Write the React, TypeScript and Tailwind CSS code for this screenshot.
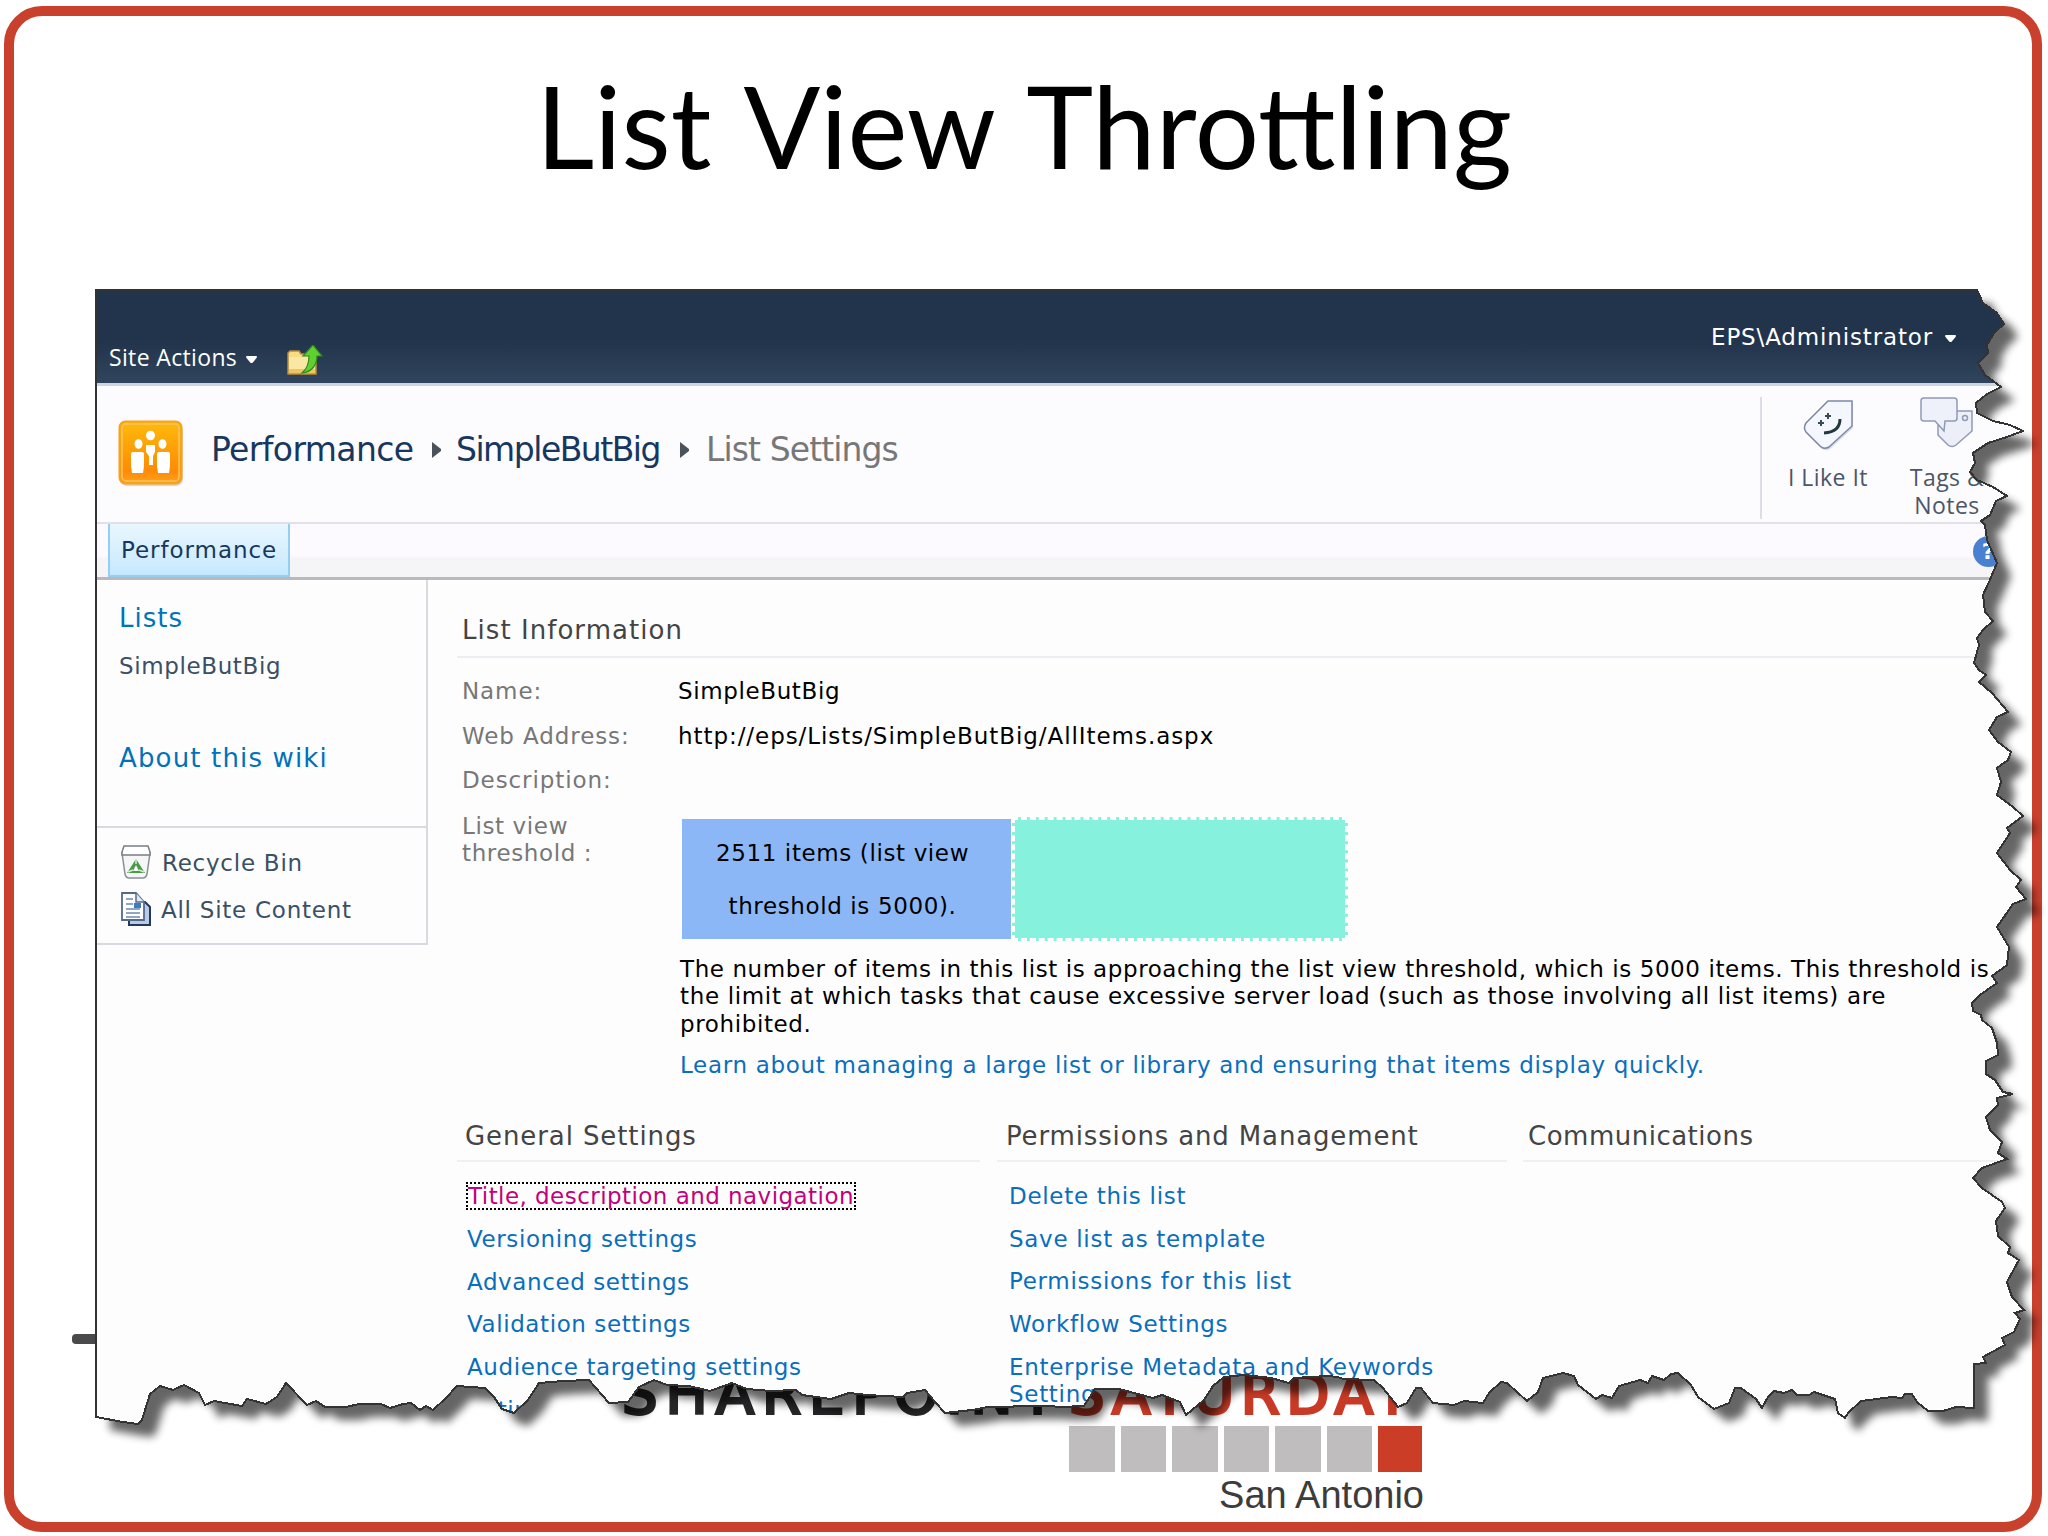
import type { ReactNode } from "react";

type Point = [number, number];

// Outline of the torn page in slide coordinates, clockwise from the top left.
const tornEdge: Point[] = [
  [96, 290], [1977, 290], [1983, 303], [1997, 313], [2004, 324], [1994, 333], [1987, 345], [1988, 353],
  [1978, 363], [1985, 375], [2001, 387], [1987, 394], [1976, 403], [1977, 413], [1993, 421], [2010, 425],
  [2023, 431], [2007, 437], [1988, 443], [1973, 453], [1975, 463], [1970, 472], [1977, 480], [1993, 487],
  [2007, 496], [1996, 501], [1990, 515], [1981, 521], [1985, 525], [1987, 540], [1997, 563], [1989, 582],
  [1983, 595], [1985, 612], [1993, 621], [1983, 630], [1977, 638], [1979, 645], [1974, 663], [1979, 670],
  [1986, 675], [1979, 682], [1992, 693], [2008, 712], [1997, 717], [1989, 730], [1998, 742], [2011, 752],
  [2008, 760], [1997, 768], [2001, 782], [1997, 795], [2013, 807], [2023, 816], [2007, 828], [2010, 833],
  [1997, 853], [2010, 870], [2021, 880], [2016, 887], [2026, 899], [2013, 904], [1997, 927], [2009, 947],
  [2007, 965], [1992, 976], [1997, 983], [1980, 995], [1972, 1003], [1973, 1011], [1981, 1015], [1982, 1020],
  [1992, 1028], [1997, 1043], [1998, 1055], [1986, 1061], [1986, 1074], [1995, 1080], [2003, 1092], [2013, 1094],
  [1997, 1098], [1998, 1105], [1986, 1117], [1990, 1130], [2002, 1142], [1998, 1153], [2007, 1159], [1982, 1168],
  [1973, 1178], [1982, 1188], [2002, 1202], [2005, 1208], [1996, 1221], [1998, 1236], [2010, 1247], [2008, 1253],
  [2019, 1260], [2007, 1282], [2012, 1297], [2024, 1310], [2015, 1313], [2020, 1319], [2014, 1332], [2002, 1338],
  [2005, 1345], [1983, 1357], [1986, 1363], [1974, 1364], [1974, 1408], [1956, 1407], [1943, 1411], [1928, 1411],
  [1917, 1402], [1912, 1394], [1905, 1394], [1902, 1398], [1892, 1397], [1861, 1401], [1848, 1413], [1845, 1418],
  [1838, 1413], [1835, 1399], [1814, 1392], [1809, 1395], [1797, 1395], [1792, 1390], [1784, 1393], [1774, 1391],
  [1768, 1397], [1762, 1408], [1756, 1399], [1741, 1388], [1735, 1388], [1729, 1403], [1714, 1409], [1698, 1397],
  [1691, 1385], [1678, 1373], [1671, 1374], [1664, 1380], [1652, 1376], [1648, 1383], [1640, 1380], [1619, 1386],
  [1612, 1398], [1602, 1395], [1596, 1399], [1578, 1385], [1574, 1376], [1563, 1373], [1543, 1378], [1538, 1392],
  [1527, 1401], [1507, 1383], [1501, 1382], [1489, 1393], [1483, 1403], [1464, 1401], [1454, 1405], [1433, 1403],
  [1421, 1388], [1416, 1388], [1407, 1403], [1398, 1407], [1383, 1388], [1374, 1380], [1343, 1379], [1338, 1377],
  [1327, 1376], [1294, 1378], [1289, 1383], [1271, 1378], [1244, 1375], [1224, 1377], [1213, 1386], [1204, 1400],
  [1186, 1415], [1180, 1402], [1162, 1395], [1153, 1398], [1119, 1389], [1095, 1389], [1084, 1406], [1061, 1407],
  [1048, 1406], [1019, 1406], [1008, 1407], [988, 1407], [972, 1410], [945, 1413], [936, 1403], [925, 1390],
  [907, 1393], [903, 1397], [867, 1395], [849, 1393], [831, 1399], [816, 1397], [802, 1395], [796, 1390],
  [771, 1391], [747, 1389], [732, 1383], [710, 1391], [689, 1386], [667, 1385], [654, 1380], [639, 1387],
  [628, 1402], [609, 1403], [589, 1380], [563, 1381], [539, 1383], [528, 1400], [514, 1413], [502, 1409],
  [494, 1397], [485, 1388], [457, 1386], [446, 1398], [433, 1410], [426, 1406], [420, 1410], [411, 1403],
  [403, 1404], [390, 1408], [381, 1404], [359, 1404], [346, 1407], [325, 1407], [316, 1401], [307, 1405],
  [286, 1383], [277, 1397], [266, 1404], [247, 1399], [242, 1406], [214, 1401], [205, 1405], [199, 1393],
  [184, 1385], [173, 1390], [160, 1386], [150, 1394], [142, 1420], [138, 1424], [123, 1422], [96, 1417],
];

const PAGE_X = 96;
const PAGE_Y = 290;

const outline = tornEdge.map(([x, y]) => `${x},${y}`).join(" ");
const pageClip = `polygon(${tornEdge.map(([x, y]) => `${x - PAGE_X}px ${y - PAGE_Y}px`).join(", ")})`;

const generalLinks = ["Versioning settings", "Advanced settings", "Validation settings", "Audience targeting settings", "Rating settings"];
const permissionLinks = ["Delete this list", "Save list as template", "Permissions for this list", "Workflow Settings"];

function Caret() {
  return (
    <svg className="h-[7px] w-[11px]" viewBox="0 0 12 8" fill="#fff">
      <path d="M0 0h12v2L7 8H5L0 2z" />
    </svg>
  );
}

function Chevron() {
  return (
    <svg className="h-[16px] w-[9px] shrink-0" viewBox="0 0 9 16" fill="#4a525c">
      <path d="M0 0l9 7v2l-9 7z" />
    </svg>
  );
}

function FolderUpIcon() {
  return (
    <svg className="h-[31px] w-[36px]" viewBox="0 0 36 31">
      <path d="M1 8l2-2h9l2 3h15v20H1z" fill="#f7dc86" stroke="#b98a3c" strokeWidth="1.5" />
      <path d="M2 12h26v16H2z" fill="#fbe7a4" />
      <path d="M2 24h26v4H2z" fill="#efc562" />
      <path d="M26 0l9 11h-5c0 9-5 16-15 17 5-4 7-9 7-17h-6z" fill="#5fd02f" stroke="#2f8a1c" strokeWidth="1.2" />
    </svg>
  );
}

function SiteIcon() {
  return (
    <svg className="h-[66px] w-[66px] shrink-0" viewBox="0 0 66 66">
      <defs>
        <linearGradient id="site" x1="0" y1="0" x2="0" y2="1">
          <stop offset="0" stopColor="#fdba0c" />
          <stop offset="0.8" stopColor="#fd8b05" />
          <stop offset="1" stopColor="#fda21f" />
        </linearGradient>
      </defs>
      <rect x="2" y="3" width="63" height="63" rx="7" fill="#d9d5d2" />
      <rect x="1.5" y="1.5" width="62" height="62" rx="6" fill="url(#site)" stroke="#fba01d" strokeWidth="2" />
      <rect x="4" y="4" width="57" height="57" rx="4" fill="none" stroke="#ffc65a" strokeWidth="1.5" />
      <g fill="#fff">
        <ellipse cx="32.5" cy="15.5" rx="4.5" ry="4.8" />
        <ellipse cx="20.5" cy="24" rx="4" ry="4.8" />
        <ellipse cx="44.5" cy="24" rx="4" ry="4.8" />
        <path d="M28 25h9v7l-2 4v9h-4v-9l-3-4z" />
        <path d="M13 34q0-2 2-2h9q2 0 2 2v12l-1 7H14l-1-7z" />
        <path d="M39 34q0-2 2-2h9q2 0 2 2v12l-1 7H40l-1-7z" />
      </g>
    </svg>
  );
}

function LikeIcon() {
  return (
    <svg className="h-[52px] w-[54px]" viewBox="0 0 52 52">
      <path d="M26 2h24v25L27 48q-5 3-9-1L4 33q-3-4 0-9z" transform="translate(1 2)" fill="#d8dae6" />
      <path d="M26 2h24v25L27 48q-5 3-9-1L4 33q-3-4 0-9z" fill="#f4f7fd" stroke="#7d88a8" strokeWidth="1.5" />
      <path d="M26 14v6m-3-3h6M19 21v6m-3-3h6" stroke="#3b4a55" strokeWidth="2" />
      <path d="M38 20q0 13-16 14" fill="none" stroke="#23393f" strokeWidth="3" />
    </svg>
  );
}

function NotesIcon() {
  return (
    <svg className="h-[52px] w-[54px]" viewBox="0 0 54 52">
      <path d="M18 28l14-14h20v20L36 48q-4 3-8 0L18 38z" fill="#eceff8" stroke="#8f9ab5" strokeWidth="1.5" />
      <circle cx="45" cy="21" r="2.5" fill="none" stroke="#8f9ab5" strokeWidth="1.5" />
      <path d="M4 1h30q3 0 3 3v17q0 3-3 3h-9l-1 10-9-10H4q-3 0-3-3V4q0-3 3-3z" fill="#eef1f9" stroke="#8f9ab5" strokeWidth="1.5" />
    </svg>
  );
}

function RecycleIcon() {
  return (
    <svg className="h-[34px] w-[30px]" viewBox="0 0 30 34">
      <path d="M1 8h28l-3 21q-1 4-4 4H8q-3 0-4-4z" fill="#f5f6f7" stroke="#8a9096" strokeWidth="1.5" />
      <path d="M3 1h24l2 6v3H1V7z" fill="#fff" stroke="#777d84" strokeWidth="1.5" />
      <path d="M15 14l9 14H6z" fill="#4b9a45" />
      <path d="M15 20l3 6h-6z" fill="#f5f6f7" />
      <path d="M15 14v5M7 27l5-2M23 27l-5-2" stroke="#d9ead7" strokeWidth="1.5" />
    </svg>
  );
}

function ContentIcon() {
  return (
    <svg className="h-[34px] w-[30px]" viewBox="0 0 30 34">
      <path d="M8 10h16l5 5v18H8z" fill="#b8cbe6" stroke="#22395c" strokeWidth="2" />
      <path d="M1 1h14l8 9v18H1z" fill="#fff" stroke="#54698c" strokeWidth="1.8" />
      <path d="M15 1v9h8" fill="#dde7f5" stroke="#54698c" strokeWidth="1.5" />
      <path d="M5 7h7M5 12h7M5 17h14M5 21h14M5 25h14" stroke="#6e88b5" strokeWidth="1.5" />
      <path d="M13 11h7v5h-7z" fill="#3d78c9" />
    </svg>
  );
}

function Field({ label, children }: { label: string; children?: ReactNode }) {
  return (
    <div className="flex h-[44.6px] items-center">
      <span className="w-[216px] tracking-[0.9px] text-[#777]">{label}</span>
      <span className="text-black">{children}</span>
    </div>
  );
}

function Column({ title, className, children }: { title: string; className: string; children?: ReactNode }) {
  return (
    <div className={className}>
      <h3 className="h-[43px] border-b-2 border-[#f0f0f3] pl-[8px] text-[26px] leading-[34px] text-[#444]">{title}</h3>
      <ul className="mt-[13px] pl-[10px] text-[#0a6ebd]">{children}</ul>
    </div>
  );
}

function Page() {
  return (
    <section
      className="relative h-[1136px] w-[1932px] overflow-hidden bg-[#fdfdfd] font-['DejaVu_Sans',sans-serif] text-[23px] tracking-[0.62px] whitespace-nowrap"
      style={{ clipPath: pageClip }}
    >
      <header className="flex h-[96px] justify-between border-b-3 border-[#ccd5e4] bg-linear-to-b from-[#22344c] from-55% to-[#30455d] text-white">
        <div className="flex items-start pt-[51px] pl-[13px] font-['Open_Sans',sans-serif] text-[23px] leading-[32px] tracking-[0.35px]">
          <span className="w-[128px]">Site Actions</span>
          <span className="mt-[15px] ml-[9px] flex"><Caret /></span>
          <span className="mt-[4px] ml-[30px]"><FolderUpIcon /></span>
        </div>
        <div className="flex w-[317px] items-start pt-[31px] leading-[32px] tracking-[0.85px]">
          <span className="w-[222px]">EPS\Administrator</span>
          <span className="mt-[14px] ml-[12px] flex"><Caret /></span>
        </div>
      </header>

      <div className="flex h-[138px] border-b-2 border-[#e2e0e6] bg-[#fcfbfe]">
        <div className="flex w-[1664px] items-start pt-[34px] pl-[22px]">
          <SiteIcon />
          <nav className="mt-[10px] ml-[27px] flex items-center text-[33px] leading-[40px] text-[#17375e]">
            <span className="w-[221px] tracking-[-0.6px]">Performance</span>
            <Chevron />
            <span className="ml-[15px] w-[224px] tracking-[-1.5px]">SimpleButBig</span>
            <Chevron />
            <span className="ml-[17px] tracking-[-0.9px] text-[#777]">List Settings</span>
          </nav>
        </div>
        <div className="mt-[11px] flex h-[122px] border-l-2 border-[#dedce4] font-['Open_Sans',sans-serif] text-[23px] leading-[28px] tracking-[0.45px] text-[#4c5666]">
          <div className="flex w-[132px] flex-col items-center pt-[2px]">
            <LikeIcon />
            <span className="mt-[12px]">I Like It</span>
          </div>
          <div className="flex w-[106px] flex-col items-center text-center">
            <NotesIcon />
            <span className="mt-[14px]">Tags &amp;<br />Notes</span>
          </div>
        </div>
      </div>

      <div className="flex h-[56px] justify-between border-b-3 border-[#bab8be] bg-linear-to-b from-[#fcfaff] from-60% to-[#f5f5f7] to-65% pl-[12px]">
        <div className="w-[182px] border-2 border-t-0 border-[#93cff3] bg-linear-to-b from-[#e9f7ff] to-[#c6e8fe] pl-[11px] leading-[52px] tracking-[0.95px] text-[#17375e]">
          Performance
        </div>
        <div className="mt-[12px] mr-[24px] h-[31px] w-[31px] rounded-full bg-[#4a80d0] text-center text-[22px] leading-[31px] font-bold text-white">?</div>
      </div>

      <div className="flex">
        <aside className="h-[365px] w-[332px] border-r-2 border-b-2 border-[#dcd8e0] text-[#3b4f65]">
          <div className="h-[248px] border-b-2 border-[#dcd8e0] pt-[20px] pl-[23px]">
            <h2 className="text-[26px] leading-[36px] tracking-[1px] text-[#0072bc]">Lists</h2>
            <p className="mt-[14px] leading-[32px]">SimpleButBig</p>
            <h2 className="mt-[58px] text-[26px] leading-[36px] tracking-[1.15px] text-[#0072bc]">About this wiki</h2>
          </div>
          <div className="flex flex-col gap-[13px] pt-[17px] pl-[25px]">
            <p className="flex h-[34px] items-center gap-[11px]"><RecycleIcon /><span className="pt-[3px] tracking-[0.75px]">Recycle Bin</span></p>
            <p className="flex h-[34px] items-center gap-[10px]"><ContentIcon /><span className="pt-[3px] tracking-[0.75px]">All Site Content</span></p>
          </div>
        </aside>

        <main className="w-[1600px] pl-[29px]">
          <h2 className="h-[78px] border-b-2 border-[#eeeef2] pt-[32px] pl-[5px] text-[26px] leading-[36px] tracking-[1.05px] text-[#444]">List Information</h2>
          <div className="mt-[11px] pl-[5px]">
            <Field label="Name:">SimpleButBig</Field>
            <Field label="Web Address:"><span className="tracking-[0.94px]">http://eps/Lists/SimpleButBig/AllItems.aspx</span></Field>
            <Field label="Description:" />
            <div className="flex">
              <div className="w-[220px] pt-[10px] leading-[27.5px] text-[#777]">List view<br />threshold :</div>
              <div className="mt-[14px] flex items-center">
                <div className="mr-[1px] h-[120px] w-[329px] bg-[#8cb7f6] pt-[8px] pr-[8px] text-center leading-[53px] text-black">
                  2511 items (list view<br />threshold is 5000).
                </div>
                <div className="h-[124px] w-[336px] border-3 border-dashed border-white bg-[#86f2dd]" />
              </div>
            </div>
            <div className="mt-[15px] ml-[218px] leading-[27.5px] text-black">
              <p>
                <span className="tracking-[0.58px]">The number of items in this list is approaching the list view threshold, which is 5000 items. This threshold is</span><br />
                <span className="tracking-[0.66px]">the limit at which tasks that cause excessive server load (such as those involving all list items) are</span><br />
                prohibited.
              </p>
              <p className="mt-[14px] tracking-[0.69px] text-[#0a6ebd]">Learn about managing a large list or library and ensuring that items display quickly.</p>
            </div>
          </div>
          <div className="mt-[39px] flex tracking-[0.59px]">
            <Column title="General Settings" className="mr-[17px] w-[523px] [&>h3]:tracking-[0.9px]">
              <li className="flex h-[43px] items-center">
                <span className="-ml-px border-2 border-dotted border-black leading-[24px] tracking-[0.45px] text-[#c4007a]">Title, description and navigation</span>
              </li>
              {generalLinks.map((link) => (
                <li className="h-[42.8px] leading-[42.8px]" key={link}>{link}</li>
              ))}
            </Column>
            <Column title="Permissions and Management" className="mr-[16px] w-[510px] [&>h3]:pl-[9px] [&>h3]:tracking-[0.85px] [&>ul]:pl-[12px]">
              {permissionLinks.map((link) => (
                <li className="h-[42.8px] leading-[42.8px] tracking-[0.7px]" key={link}>{link}</li>
              ))}
              <li className="pt-[8px] leading-[27.5px] tracking-[0.7px]">Enterprise Metadata and Keywords<br />Settings</li>
            </Column>
            <Column title="Communications" className="w-[500px] [&>h3]:pl-[5px] [&>h3]:tracking-[0.5px]" />
          </div>
        </main>
      </div>
    </section>
  );
}

function Logo() {
  return (
    <div className="absolute top-[1360px] left-[622px] w-[802px]">
      <div className="flex h-[66px] font-['DejaVu_Sans',sans-serif] text-[56px] leading-[68px] whitespace-nowrap">
        <span className="w-[447px] tracking-[8px] text-[#262628] [-webkit-text-stroke:3px_#262628]">SHAREPOINT</span>
        <span className="tracking-[6.5px] text-[#c93a26] [-webkit-text-stroke:3px_#c93a26]">SATURDAY</span>
      </div>
      <div className="ml-[447px] flex gap-[6px]">
        {[0, 1, 2, 3, 4, 5].map((day) => (
          <div className="h-[46px] w-[45.5px] bg-[#bfbdbe]" key={day} />
        ))}
        <div className="h-[46px] w-[44px] bg-[#cc3d28]" />
      </div>
      <p className="mt-[3px] text-right font-['Liberation_Sans',sans-serif] text-[38px] leading-[40px] text-[#3c3c3c]">San Antonio</p>
    </div>
  );
}

export default function App() {
  return (
    <div className="relative h-[1536px] w-[2048px] overflow-hidden bg-white">
      <div className="absolute top-[6px] left-[4px] h-[1526px] w-[2038px] rounded-[38px] border-10 border-[#c9402d]" />
      <div className="absolute top-[1334px] left-[72px] h-[10px] w-[30px] rounded-l-[4px] bg-[#4a4a4c]" />
      <Logo />
      <svg className="absolute inset-0" width="2048" height="1536">
        <defs>
          <filter id="soft" x="-5%" y="-5%" width="110%" height="110%">
            <feGaussianBlur stdDeviation="4" />
          </filter>
        </defs>
        <polygon points={outline} transform="translate(14 13)" fill="#000" opacity="0.6" filter="url(#soft)" />
      </svg>
      <h1 className="relative h-[290px] pt-[59px] text-center font-['Lato',sans-serif] text-[113.5px] leading-[133px] [word-spacing:7px] text-black">List View Throttling</h1>
      <div className="ml-[96px]">
        <Page />
      </div>
      <svg className="absolute inset-0" width="2048" height="1536">
        <polygon points={outline} fill="none" stroke="#333" strokeWidth="2" shapeRendering="crispEdges" />
      </svg>
    </div>
  );
}
